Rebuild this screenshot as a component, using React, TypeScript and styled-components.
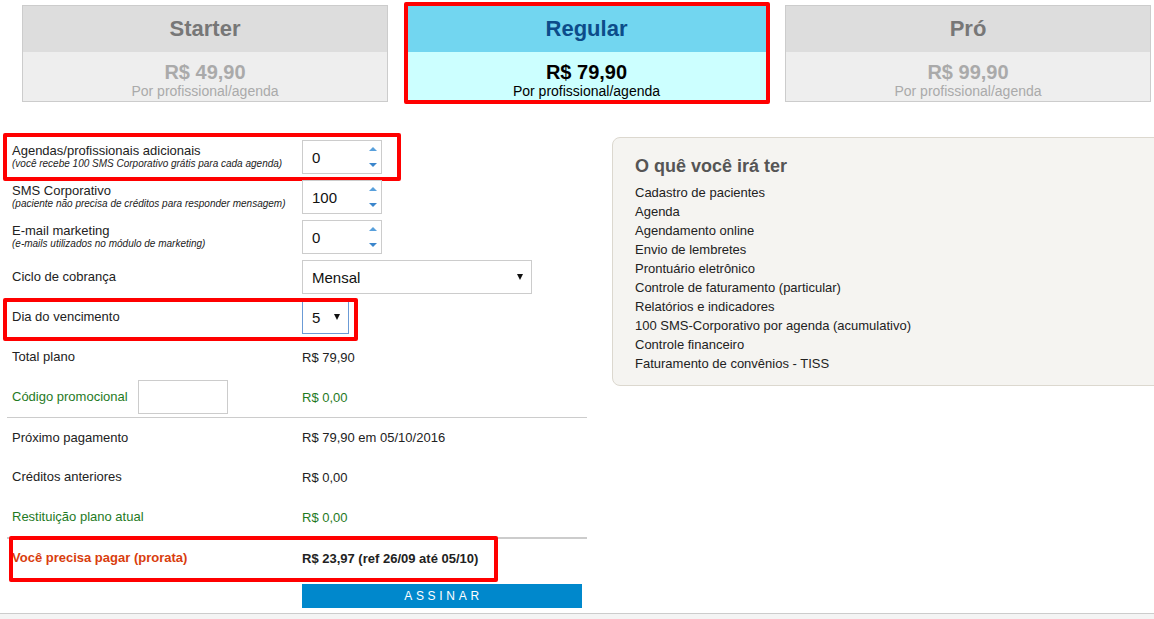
import { FC } from "react";
import styled, { createGlobalStyle } from "styled-components";

const GlobalStyle = createGlobalStyle`
  html, body {
    margin: 0;
    padding: 0;
    background: #fff;
    overflow: hidden;
  }
  body {
    font-family: "Liberation Sans", Arial, sans-serif;
    color: #222;
  }
`;

const GREEN = "#1f7a1f";
const ORANGE = "#d93d0e";

const Page = styled.div`
  display: flex;
  flex-direction: column;
  height: 100vh;
  width: 1154px;
  overflow: hidden;
`;

const PlanRow = styled.div`
  display: flex;
  align-items: flex-start;
  gap: 15.5px;
  padding: 5px 0 0 22px;
`;

const PlanCard = styled.div<{ $selected?: boolean }>`
  width: 366px;
  box-sizing: border-box;
  border: ${({ $selected }) => ($selected ? "4px solid #ff0000" : "1px solid #cccccc")};
  border-radius: ${({ $selected }) => ($selected ? "2px" : "0")};
  margin-top: ${({ $selected }) => ($selected ? "-3px" : "0")};
  text-align: center;
`;

const PlanHeader = styled.div<{ $selected?: boolean }>`
  height: 46px;
  display: flex;
  align-items: center;
  justify-content: center;
  font-size: 22px;
  font-weight: bold;
  background: ${({ $selected }) => ($selected ? "#72d6f0" : "#dddddd")};
  color: ${({ $selected }) => ($selected ? "#0c4c8a" : "#777777")};
`;

const PlanBody = styled.div<{ $selected?: boolean }>`
  height: ${({ $selected }) => ($selected ? "48px" : "49px")};
  box-sizing: border-box;
  padding-top: 9px;
  background: ${({ $selected }) => ($selected ? "#ccffff" : "#eeeeee")};
  color: ${({ $selected }) => ($selected ? "#000" : "#aaaaaa")};
`;

const Price = styled.div`
  font-size: 20px;
  font-weight: bold;
  line-height: 22px;
`;

const PerUnit = styled.div`
  font-size: 14px;
  line-height: 16px;
`;

const Main = styled.div`
  display: flex;
  align-items: flex-start;
  padding-top: 33px;
`;

const Form = styled.div`
  width: 580px;
  margin-left: 7px;
  flex-shrink: 0;
`;

const Row = styled.div<{ $divider?: number }>`
  position: relative;
  display: flex;
  align-items: center;
  height: 40px;
  box-sizing: border-box;
  border-top: ${({ $divider }) => ($divider ? `${$divider}px solid #cccccc` : "none")};
`;

const Label = styled.div<{ $color?: string; $bold?: boolean }>`
  width: 295px;
  flex-shrink: 0;
  box-sizing: border-box;
  padding-left: 5px;
  font-size: 13px;
  line-height: 14px;
  color: ${({ $color }) => $color || "#222"};
  font-weight: ${({ $bold }) => ($bold ? "bold" : "normal")};
  display: flex;
  align-items: center;
`;

const LabelStack = styled.div`
  display: flex;
  flex-direction: column;
`;

const Hint = styled.span`
  font-size: 10px;
  line-height: 12px;
  font-style: italic;
`;

const Value = styled.div<{ $color?: string; $bold?: boolean }>`
  font-size: 13px;
  color: ${({ $color }) => $color || "#222"};
  font-weight: ${({ $bold }) => ($bold ? "bold" : "normal")};
  display: flex;
  align-items: center;
`;

const Field = styled.div<{ $width: number; $focused?: boolean }>`
  position: relative;
  width: ${({ $width }) => $width}px;
  height: 34px;
  box-sizing: border-box;
  border: 1px solid ${({ $focused }) => ($focused ? "#6b9bd6" : "#cccccc")};
  background: #fff;
  display: flex;
  align-items: center;
  padding-left: 9px;
  font-size: 15px;
  color: #111;
`;

const PromoInput = styled.input`
  width: 90px;
  height: 34px;
  box-sizing: border-box;
  margin-left: 10px;
  border: 1px solid #cccccc;
  outline: none;
  font: inherit;
`;

const Arrow = styled.span<{ $dir: "up" | "down" }>`
  position: absolute;
  right: 4px;
  ${({ $dir }) => ($dir === "up" ? "top: 6px;" : "bottom: 6px;")}
  width: 0;
  height: 0;
  border-left: 4px solid transparent;
  border-right: 4px solid transparent;
  ${({ $dir }) =>
    $dir === "up"
      ? "border-bottom: 4px solid #58a0dc;"
      : "border-top: 4px solid #3b86cc;"}
`;

const Caret = styled.span`
  position: absolute;
  right: 8px;
  top: 13px;
  width: 0;
  height: 0;
  border-left: 3.5px solid transparent;
  border-right: 3.5px solid transparent;
  border-top: 6px solid #111;
`;

const Highlight = styled.div<{ $top: number; $left: number; $w: number; $h: number }>`
  position: absolute;
  top: ${({ $top }) => $top}px;
  left: ${({ $left }) => $left}px;
  width: ${({ $w }) => $w}px;
  height: ${({ $h }) => $h}px;
  box-sizing: border-box;
  border: 4px solid #ff0000;
  border-radius: 2px;
  pointer-events: none;
`;

const ButtonRow = styled.div`
  height: 36px;
  padding-top: 7px;
  box-sizing: border-box;
  padding-left: 295px;
`;

const SubmitButton = styled.button`
  width: 280px;
  height: 24px;
  border: none;
  background: #0088cc;
  color: #fff;
  font-family: "Liberation Sans", Arial, sans-serif;
  font-size: 12px;
  letter-spacing: 3.7px;
  padding: 0 0 0 3px;
  cursor: pointer;
`;

const Features = styled.div`
  margin-left: 25px;
  width: 600px;
  flex-shrink: 0;
  box-sizing: border-box;
  background: #f5f4f1;
  border: 1px solid #dcd8cf;
  border-radius: 8px;
  padding: 16px 22px 12px;
`;

const FeaturesTitle = styled.h3`
  margin: 0 0 4px;
  font-size: 18px;
  line-height: 25px;
  font-weight: bold;
  color: #555;
`;

const FeatureList = styled.ul`
  list-style: none;
  margin: 0;
  padding: 0;
`;

const FeatureItem = styled.li`
  font-size: 13px;
  line-height: 19px;
  color: #222;
`;

const Footer = styled.div`
  flex: 1;
  border-top: 1px solid #cccccc;
  background: #f4f4f4;
`;

const plans = [
  { name: "Starter", price: "R$ 49,90" },
  { name: "Regular", price: "R$ 79,90", selected: true },
  { name: "Pró", price: "R$ 99,90" },
];

const features = [
  "Cadastro de pacientes",
  "Agenda",
  "Agendamento online",
  "Envio de lembretes",
  "Prontuário eletrônico",
  "Controle de faturamento (particular)",
  "Relatórios e indicadores",
  "100 SMS-Corporativo por agenda (acumulativo)",
  "Controle financeiro",
  "Faturamento de convênios - TISS",
];

const NumberField: FC<{ value: string }> = ({ value }) => (
  <Field $width={80}>
    {value}
    <Arrow $dir="up" />
    <Arrow $dir="down" />
  </Field>
);

const App: FC = () => {
  return (
    <Page>
      <GlobalStyle />
      <PlanRow>
        {plans.map((p) => (
          <PlanCard key={p.name} $selected={p.selected}>
            <PlanHeader $selected={p.selected}>{p.name}</PlanHeader>
            <PlanBody $selected={p.selected}>
              <Price>{p.price}</Price>
              <PerUnit>Por profissional/agenda</PerUnit>
            </PlanBody>
          </PlanCard>
        ))}
      </PlanRow>

      <Main>
        <Form>
          <Row>
            <Label>
              <LabelStack>
                <span>Agendas/profissionais adicionais</span>
                <Hint>(você recebe 100 SMS Corporativo grátis para cada agenda)</Hint>
              </LabelStack>
            </Label>
            <NumberField value="0" />
            <Highlight $top={-4} $left={-4} $w={398} $h={48} />
          </Row>
          <Row>
            <Label>
              <LabelStack>
                <span>SMS Corporativo</span>
                <Hint>(paciente não precisa de créditos para responder mensagem)</Hint>
              </LabelStack>
            </Label>
            <NumberField value="100" />
          </Row>
          <Row>
            <Label>
              <LabelStack>
                <span>E-mail marketing</span>
                <Hint>(e-mails utilizados no módulo de marketing)</Hint>
              </LabelStack>
            </Label>
            <NumberField value="0" />
          </Row>
          <Row>
            <Label>Ciclo de cobrança</Label>
            <Field $width={230}>
              Mensal
              <Caret />
            </Field>
          </Row>
          <Row>
            <Label>Dia do vencimento</Label>
            <Field $width={47} $focused>
              5
              <Caret />
            </Field>
            <Highlight $top={1} $left={-4} $w={355} $h={43} />
          </Row>
          <Row>
            <Label>Total plano</Label>
            <Value>R$ 79,90</Value>
          </Row>
          <Row>
            <Label $color={GREEN}>
              Código promocional
              <PromoInput />
            </Label>
            <Value $color={GREEN}>R$ 0,00</Value>
          </Row>
          <Row $divider={1}>
            <Label>Próximo pagamento</Label>
            <Value>R$ 79,90 em 05/10/2016</Value>
          </Row>
          <Row>
            <Label>Créditos anteriores</Label>
            <Value>R$ 0,00</Value>
          </Row>
          <Row>
            <Label $color={GREEN}>Restituição plano atual</Label>
            <Value $color={GREEN}>R$ 0,00</Value>
          </Row>
          <Row $divider={2}>
            <Label $color={ORANGE} $bold>
              Você precisa pagar (prorata)
            </Label>
            <Value $bold>R$ 23,97 (ref 26/09 até 05/10)</Value>
            <Highlight $top={-3} $left={2} $w={489} $h={46} />
          </Row>
          <ButtonRow>
            <SubmitButton>ASSINAR</SubmitButton>
          </ButtonRow>
        </Form>

        <Features>
          <FeaturesTitle>O quê você irá ter</FeaturesTitle>
          <FeatureList>
            {features.map((f) => (
              <FeatureItem key={f}>{f}</FeatureItem>
            ))}
          </FeatureList>
        </Features>
      </Main>

      <Footer />
    </Page>
  );
};

export default App;
